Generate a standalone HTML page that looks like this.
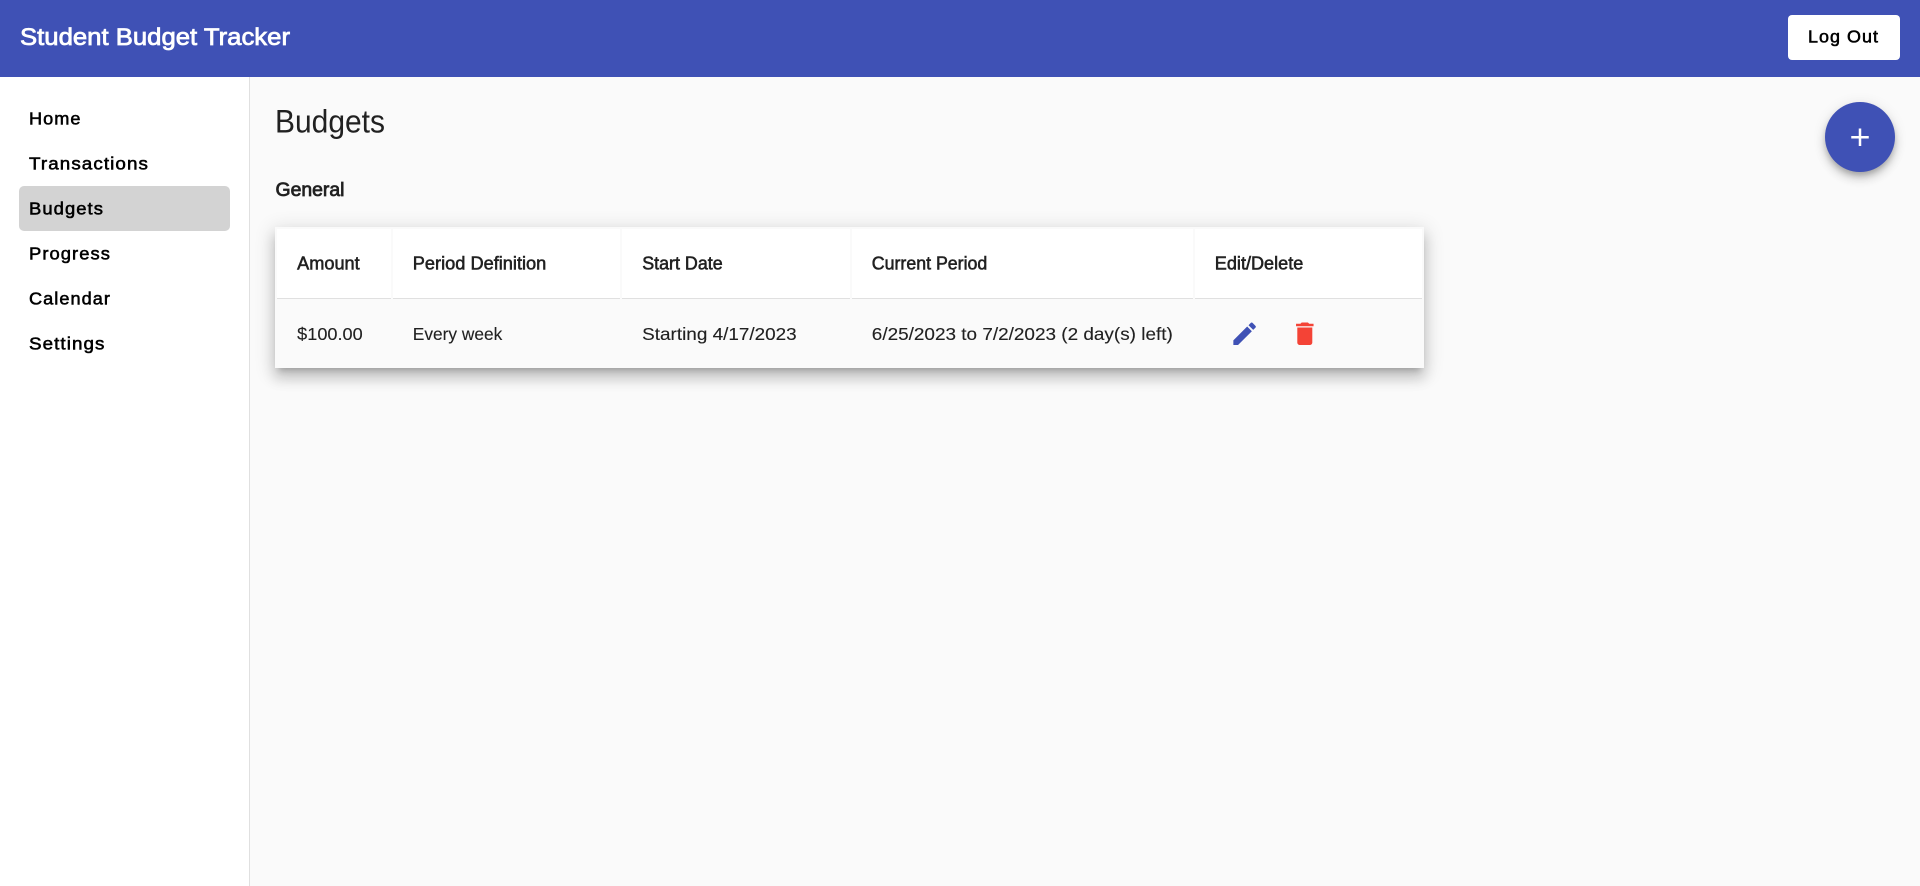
<!DOCTYPE html>
<html lang="en">
<head>
<meta charset="utf-8">
<title>Student Budget Tracker</title>
<style>
html,body{margin:0;padding:0;width:1920px;height:886px;overflow:hidden;background:#fafafa;font-family:"Liberation Sans",sans-serif}
.box{position:absolute;box-sizing:border-box}
#hdr{left:0;top:0;width:1920px;height:77px;background:#3f51b5}
#side{left:0;top:77px;width:250px;height:809px;background:#fff;border-right:1px solid #e0e0e0}
#active{left:19px;top:186px;width:211px;height:45px;background:#d3d3d3;border-radius:5px}
#logout{left:1788px;top:15px;width:112px;height:45px;background:#fff;border-radius:4px}
#fab{left:1825px;top:102px;width:70px;height:70px;border-radius:50%;background:#3f51b5;box-shadow:0 4px 6px -1px rgba(0,0,0,.2),0 7px 10px 0 rgba(0,0,0,.14),0 2px 14px 0 rgba(0,0,0,.1)}
#card{left:275px;top:227px;width:1149px;height:141px;background:#fafafa;box-shadow:0 6px 6px -4px rgba(0,0,0,.2),0 10px 12px 1px rgba(0,0,0,.14),0 4px 18px 3px rgba(0,0,0,.12)}
.th{top:229px;height:70px;background:#fff;border-bottom:1px solid #e0e0e0}
svg{position:absolute;left:0;top:0}
text{font-family:"Liberation Sans",sans-serif;white-space:pre}
.m{stroke:currentColor;stroke-width:.55px}
.t{stroke:currentColor;stroke-width:.75px}
.nav{font-size:17.5px;fill:#000;color:#000;letter-spacing:1px}
.h{font-size:18px;fill:#212121;color:#212121}
.c{font-size:17.5px;fill:#212121;color:#212121;stroke:currentColor;stroke-width:.12px}
</style>
</head>
<body>
<div class="box" id="hdr"></div>
<div class="box" id="side"></div>
<div class="box" id="active"></div>
<div class="box" id="logout"></div>
<div class="box" id="card"></div>
<div class="box th" style="left:277px;width:113.7px"></div>
<div class="box th" style="left:392.7px;width:227.3px"></div>
<div class="box th" style="left:622px;width:228px"></div>
<div class="box th" style="left:852px;width:341px"></div>
<div class="box th" style="left:1195px;width:227px"></div>
<div class="box" id="fab"></div>
<svg width="1920" height="886" viewBox="0 0 1920 886" xmlns="http://www.w3.org/2000/svg">
  <text class="t" x="20" y="45" font-size="24" fill="#fff" color="#fff" textLength="270" lengthAdjust="spacingAndGlyphs">Student Budget Tracker</text>
  <text class="m" x="1808" y="42.5" font-size="17.5" fill="#000" color="#000" letter-spacing="1" textLength="71" lengthAdjust="spacingAndGlyphs">Log Out</text>

  <text class="nav m" x="29" y="124.5" textLength="52.5" lengthAdjust="spacingAndGlyphs">Home</text>
  <text class="nav m" x="29" y="169.5" textLength="120" lengthAdjust="spacingAndGlyphs">Transactions</text>
  <text class="nav m" x="29" y="214.5" textLength="75" lengthAdjust="spacingAndGlyphs">Budgets</text>
  <text class="nav m" x="29" y="259.5" textLength="82" lengthAdjust="spacingAndGlyphs">Progress</text>
  <text class="nav m" x="29" y="304.5" textLength="82" lengthAdjust="spacingAndGlyphs">Calendar</text>
  <text class="nav m" x="29" y="349.5" textLength="76.5" lengthAdjust="spacingAndGlyphs">Settings</text>

  <text x="275" y="132.3" font-size="32" fill="#212121" textLength="110" lengthAdjust="spacingAndGlyphs">Budgets</text>
  <text class="t" x="275.5" y="196" font-size="19" fill="#212121" color="#212121" textLength="69" lengthAdjust="spacingAndGlyphs">General</text>

  <text class="h m" x="297.2" y="269.5" textLength="62.5" lengthAdjust="spacingAndGlyphs">Amount</text>
  <text class="h m" x="412.8" y="269.5" textLength="133.5" lengthAdjust="spacingAndGlyphs">Period Definition</text>
  <text class="h m" x="642.2" y="269.5" textLength="80.5" lengthAdjust="spacingAndGlyphs">Start Date</text>
  <text class="h m" x="871.8" y="269.5" textLength="115.5" lengthAdjust="spacingAndGlyphs">Current Period</text>
  <text class="h m" x="1214.8" y="269.5" textLength="88.5" lengthAdjust="spacingAndGlyphs">Edit/Delete</text>

  <text class="c" x="297.2" y="340" textLength="65.5" lengthAdjust="spacingAndGlyphs">$100.00</text>
  <text class="c" x="412.8" y="340" textLength="89.5" lengthAdjust="spacingAndGlyphs">Every week</text>
  <text class="c" x="642.2" y="340" textLength="154.5" lengthAdjust="spacingAndGlyphs">Starting 4/17/2023</text>
  <text class="c" x="871.8" y="340" textLength="301" lengthAdjust="spacingAndGlyphs">6/25/2023 to 7/2/2023 (2 day(s) left)</text>

  <path transform="translate(1229.6 318.8) scale(1.25)" fill="#3f51b5" d="M3 17.25V21h3.75L17.81 9.94l-3.75-3.75L3 17.25zM20.71 7.04c.39-.39.39-1.02 0-1.41l-2.34-2.34c-.39-.39-1.02-.39-1.41 0l-1.83 1.83 3.75 3.75 1.83-1.83z"/>
  <path transform="translate(1289.8 318.8) scale(1.25)" fill="#f44336" d="M6 19c0 1.1.9 2 2 2h8c1.1 0 2-.9 2-2V7H6v12zM19 4h-3.5l-1-1h-5l-1 1H5v2h14V4z"/>
  <path transform="translate(1845 122.3) scale(1.25)" fill="#fff" d="M19 13h-6v6h-2v-6H5v-2h6V5h2v6h6v2z"/>
</svg>
</body>
</html>
